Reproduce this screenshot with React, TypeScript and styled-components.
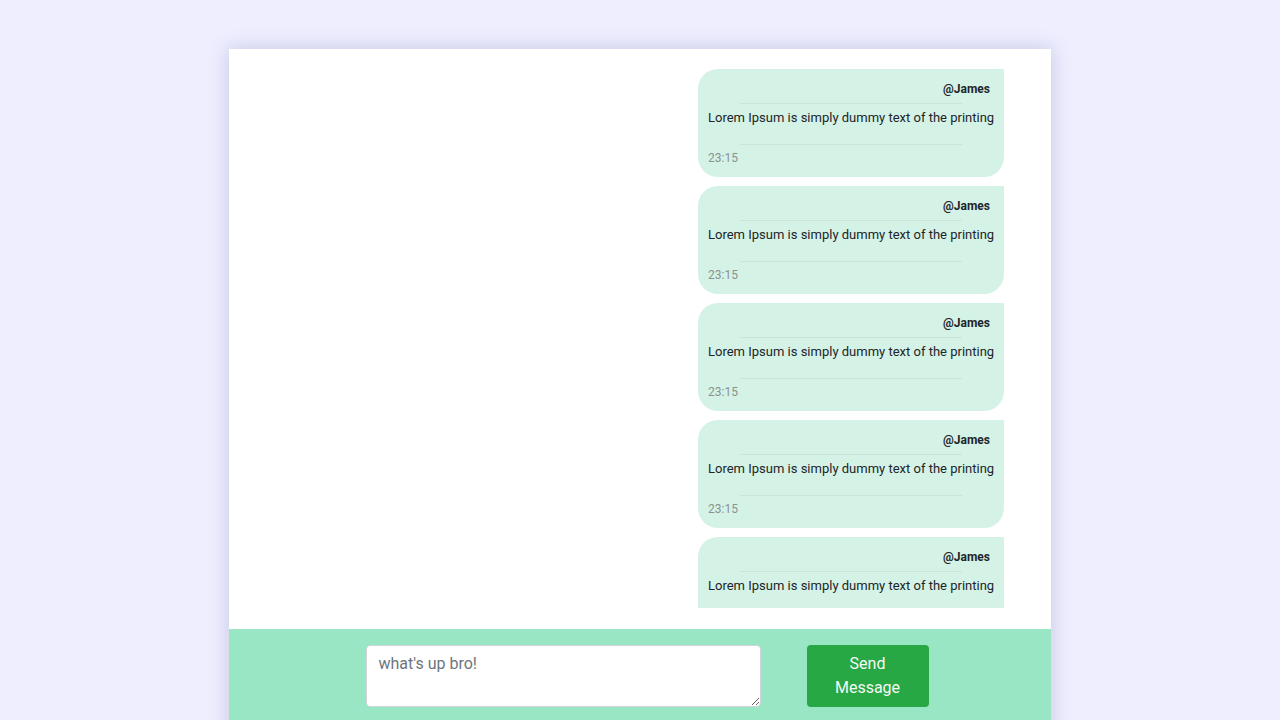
import React, { useState } from "react";
import styled, { createGlobalStyle } from "styled-components";

const GlobalStyle = createGlobalStyle`
  html, body {
    margin: 0;
    padding: 0;
    background: #eeeeff;
    font-family: Roboto, "Liberation Sans", sans-serif;
    overflow: hidden;
  }
`;

const Card = styled.div`
  width: 822px;
  margin: 49px auto 0;
  background: #fff;
  box-shadow: 0 0 18px rgba(90, 90, 150, 0.28);
`;

const MessageList = styled.div`
  height: 559px;
  box-sizing: border-box;
  padding: 20px 47px 0 20px;
  overflow: hidden;
  display: flex;
  flex-direction: column;
  align-items: flex-end;
  gap: 9px;
  margin-bottom: 21px;
`;

const Bubble = styled.div`
  width: 306px;
  box-sizing: border-box;
  flex-shrink: 0;
  background: #d5f2e6;
  border-radius: 20px 0 20px 20px;
  padding: 11px 14px 9px 10px;
  color: #212529;
`;

const Author = styled.div`
  text-align: right;
  font-size: 12px;
  font-weight: 700;
  line-height: 18px;
  margin-bottom: 5px;
`;

const Rule = styled.div<{ $gap: number }>`
  width: 222px;
  margin: 0 auto ${(p) => p.$gap}px;
  position: relative;
  left: 2px;
  border-top: 1px solid rgba(0, 0, 0, 0.055);
`;

const Text = styled.div`
  font-size: 13px;
  line-height: 20px;
  white-space: nowrap;
  margin-bottom: 16px;
`;

const Time = styled.div`
  font-size: 12px;
  line-height: 19px;
  color: #8a9391;
`;

const Footer = styled.div`
  background: #98e6c4;
  height: 110px;
  display: flex;
  justify-content: center;
  align-items: flex-start;
  gap: 46px;
  padding: 16px 0 0 14px;
  box-sizing: border-box;
`;

const Input = styled.textarea`
  width: 395px;
  height: 62px;
  box-sizing: border-box;
  border: 1px solid #ced4da;
  border-radius: 4px;
  padding: 6px 12px;
  font-family: Roboto, "Liberation Sans", sans-serif;
  font-size: 16px;
  line-height: 24px;
  color: #495057;
  &::placeholder {
    color: #6c757d;
  }
`;

const SendButton = styled.button`
  width: 122px;
  height: 62px;
  border: none;
  border-radius: 4px;
  background: #28a745;
  color: #f4fbf6;
  font-family: Roboto, "Liberation Sans", sans-serif;
  font-size: 16px;
  line-height: 24px;
  padding: 6px 24px;
`;

const messages = Array.from({ length: 5 }, () => ({
  author: "@James",
  text: "Lorem Ipsum is simply dummy text of the printing",
  time: "23:15",
}));

export default function App() {
  const [draft, setDraft] = useState("");
  return (
    <>
      <GlobalStyle />
      <Card>
        <MessageList>
          {messages.map((m, i) => (
            <Bubble key={i}>
              <Author>{m.author}</Author>
              <Rule $gap={4} />
              <Text>{m.text}</Text>
              <Rule $gap={4} />
              <Time>{m.time}</Time>
            </Bubble>
          ))}
        </MessageList>
        <Footer>
          <Input
            placeholder="what's up bro!"
            value={draft}
            onChange={(e) => setDraft(e.target.value)}
          />
          <SendButton>Send Message</SendButton>
        </Footer>
      </Card>
    </>
  );
}
